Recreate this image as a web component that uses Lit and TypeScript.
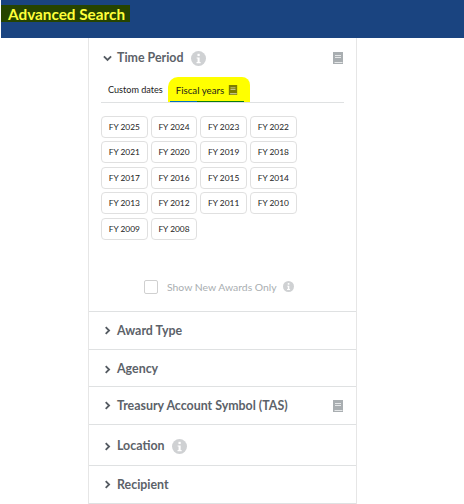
import { LitElement, html, css, svg } from "lit";
import { customElement } from "lit/decorators.js";

const YEARS = [2025,2024,2023,2022,2021,2020,2019,2018,2017,2016,2015,2014,2013,2012,2011,2010,2009,2008];

const info = (cls: string) => html`<svg class=${cls} viewBox="0 0 16 16"><circle cx="8" cy="8" r="8" fill="currentColor"/><rect x="6.9" y="3" width="2.4" height="2.4" fill="#fff"/><path d="M6 6.8h3.2v5h1.1V13H5.9v-1.2h1.1V8H6z" fill="#fff"/></svg>`;
const book = (cls: string) => html`<svg class=${cls} viewBox="0 0 12 12"><path fill="currentColor" d="M1 0h10v12H1z"/><path fill="#fff" fill-opacity=".7" d="M3 3h6v1H3zM3 5h6v1H3zM2.5 10h8v1h-8z"/></svg>`;
const chev = (open: boolean) => html`<svg class="chev" viewBox="0 0 10 10">${open
  ? svg`<path d="M1 2.6l4 4 4-4" fill="none" stroke="#555b62" stroke-width="2"/>`
  : svg`<path d="M3 1.2L6.8 5 3 8.8" fill="none" stroke="#555b62" stroke-width="2"/>`}</svg>`;

@customElement("app-root")
export class AppRoot extends LitElement {
  static styles = css`
    :host { display: block; width: 464px; height: 504px; overflow: hidden; background: #fff; font-family: Lato, "Noto Sans", sans-serif; }
    .top { height: 38px; background: #1a4480; box-sizing: border-box; padding-top: 5px; margin-left: 1px; }
    .title { display: block; width: 129px; height: 17px; box-sizing: border-box; background: #264400; color: #ffff3a; font: 700 15.3px/18px Lato, sans-serif; padding-left: 7px; white-space: nowrap; }
    .panel { width: 267px; margin-left: 88px; border-left: 1px solid #e6e6e6; border-right: 1px solid #e6e6e6; box-sizing: content-box; }
    .sec { border-bottom: 1px solid #dfe1e2; display: flex; align-items: center; padding: 0 12px 0 14px; color: #5c6269; font: 700 12.4px/16px Lato, sans-serif; gap: 5px; box-sizing: border-box; }
    .nudge { padding-top: 2px; }
    .chev { width: 9px; height: 9px; flex: none; }
    .i { width: 15px; height: 15px; color: #cfd1d3; margin-left: 2px; flex: none; }
    .b { width: 12px; height: 12px; color: #a9aeb1; margin-left: auto; flex: none; }
    .open { display: block; padding: 0 12px 0 12px; height: 273px; box-sizing: content-box; border-bottom: 1px solid #dfe1e2; }
    .head { display: flex; align-items: center; gap: 5px; height: 40px; padding-left: 2px; color: #5c6269; font: 700 12.4px/16px Lato, sans-serif; }
    .head .i { margin-left: 3px; }
    .tabs { display: flex; align-items: center; border-bottom: 1px solid #dfe1e2; height: 24px; font: 400 9.1px/24px Lato, sans-serif; color: #1b1b1b; padding-left: 7px; position: relative; }
    .tab { position: relative; display: flex; align-items: center; gap: 4px; margin-left: 13px; white-space: nowrap; font-size: 9.7px; }
    .tab::before { content: ""; position: absolute; left: -8px; top: -1px; width: 82px; height: 25px; background: #ffff00; border-radius: 10px 8px 0 0; }
    .tab::after { content: ""; position: absolute; left: -6px; top: 23px; width: 74px; height: 1px; background: linear-gradient(to right, #0071bc 0 36%, #0a7a10 36% 100%); }
    .tab span, .tab svg { position: relative; }
    .tab .b { margin: 0; width: 10px; height: 10px; color: #7d7d00; }
    .grid { display: grid; grid-template-columns: repeat(4, 46.67px); grid-auto-rows: 22px; column-gap: 3px; row-gap: 3.4px; margin-top: 13px; }
    .fy { box-sizing: border-box; border: 1px solid #e0e0e0; border-radius: 4px; text-align: center; font: 400 8.4px/20px Lato, sans-serif; color: #1b1b1b; background: #fff; }
    .new { display: flex; align-items: center; gap: 9px; margin-top: 40px; margin-left: 43px; color: #a9aeb1; font: 400 10.4px/14px Lato, sans-serif; }
    .cb { width: 12px; height: 12px; border: 1px solid #d0d0d0; border-radius: 2px; flex: none; }
    .new .i { width: 11px; height: 11px; margin-left: -3px; }
    .h38 { height: 38px; }
    .h37 { height: 37px; }
    .h41 { height: 41px; }
  `;
  render() {
    return html`
      <div class="top"><div class="title">Advanced Search</div></div>
      <div class="panel">
        <div class="open">
          <div class="head">${chev(true)}<span>Time Period</span>${info("i")}${book("b")}</div>
          <div class="tabs"><span>Custom dates</span><div class="tab"><span>Fiscal years</span>${book("b")}</div></div>
          <div class="grid">${YEARS.map((y) => html`<div class="fy">FY ${y}</div>`)}</div>
          <div class="new"><span class="cb"></span><span>Show New Awards Only</span>${info("i")}</div>
        </div>
        <div class="sec h38">${chev(false)}<span>Award Type</span></div>
        <div class="sec h37 nudge">${chev(false)}<span>Agency</span></div>
        <div class="sec h38">${chev(false)}<span>Treasury Account Symbol (TAS)</span>${book("b")}</div>
        <div class="sec h41 nudge">${chev(false)}<span>Location</span>${info("i")}</div>
        <div class="sec h38">${chev(false)}<span>Recipient</span></div>
      </div>
    `;
  }
}
